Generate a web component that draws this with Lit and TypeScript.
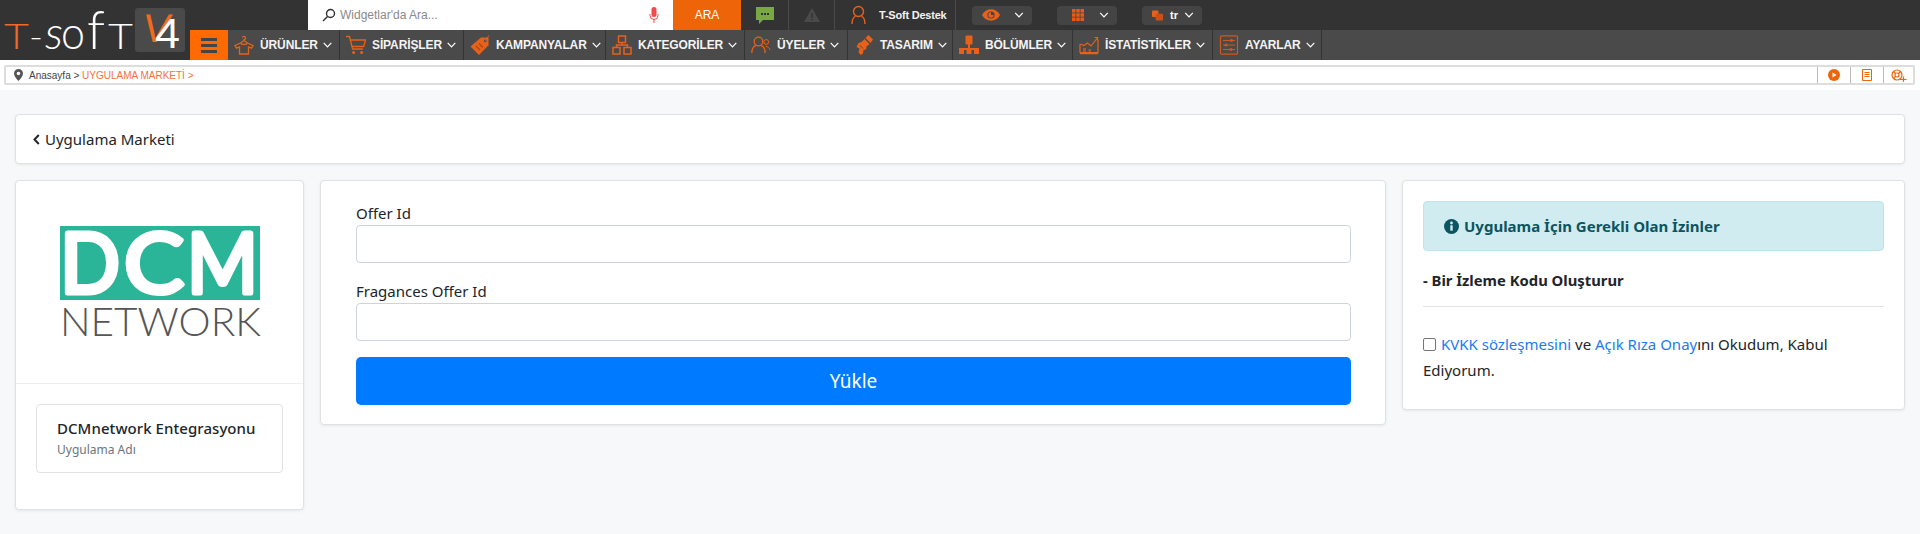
import { LitElement, html, css, svg } from "lit";
import { customElement } from "lit/decorators.js";

const O = "#e8611a";
const chev = (w = 9) => svg`<svg class="chev" width="${w}" height="6" viewBox="0 0 9 6"><path d="M.7.9 4.500 4.800 8.300.9" fill="none" stroke="#fff" stroke-width="1.200"/></svg>`;

const icons: Record<string, unknown> = {
  shirt: svg`<svg width="20" height="20" viewBox="0 0 20 20" fill="none" stroke="${O}" stroke-width="1.300"><path d="M6.500 8 1 10.500l1.500 2.600 3-1.200V19h9v-7.100l3 1.200 1.500-2.600L13.500 8l-3.500-2.500z"/><path d="M8.400 2.600a1.600 1.600 0 1 1 1.600 2v1.500"/><path d="M6.500 8c1 2 6 2 7 0"/></svg>`,
  cart: svg`<svg width="20" height="20" viewBox="0 0 20 20" fill="none" stroke="${O}" stroke-width="1.300"><path d="M0 1.500h3.500L6.600 14h10.200"/><path d="M4.600 5h15l-2 6.500H6.200"/><circle cx="7.600" cy="17.400" r="1.500" fill="${O}" stroke="none"/><circle cx="15.600" cy="17.400" r="1.500" fill="${O}" stroke="none"/></svg>`,
  tag: svg`<svg width="20" height="20" viewBox="0 0 20 20"><path d="M11 2.500h7.500v7.800L9 20 .5 11.500z" fill="${O}"/><circle cx="15.200" cy="5.800" r="1.400" fill="#4a4a4a"/><path d="M15.200 5.800 19 .5" stroke="${O}" fill="none"/><path d="M6 11l4 4M9 8.500l4 4" stroke="#a8471a" stroke-width="1.200"/></svg>`,
  org: svg`<svg width="20" height="20" viewBox="0 0 20 20" fill="none" stroke="${O}" stroke-width="1.500"><rect x="6.500" y="1" width="7" height="6.500"/><rect x="1" y="12.500" width="7" height="6.500"/><rect x="12" y="12.500" width="7" height="6.500"/><path d="M10 7.500V10M4.500 12.500V10h11v2.500"/></svg>`,
  users: svg`<svg width="20" height="20" viewBox="0 0 20 20" fill="none" stroke="${O}" stroke-width="1.300"><circle cx="7.500" cy="6.500" r="4.300"/><path d="M.8 18c0-5 2.600-7.200 4.200-7.500M14.200 18c0-5-2.600-7.200-4.200-7.500"/><circle cx="15.200" cy="7" r="2.400" stroke-width="1"/><path d="M14.800 11.300c2 .3 3.700 1.600 4.300 3.700" stroke-width="1"/></svg>`,
  brush: svg`<svg width="20" height="22" viewBox="0 0 20 22"><path d="M14.500 1 19 5.500l-2.500 3.500-5-5z" fill="${O}"/><path d="M10.500 5l5 5-3 2.500-.5 3-2.500.5-.5 3.500-2.500 1.500-2-3 1-3.500-3-1.500 2-4 3-1z" fill="${O}"/><path d="M6 11.500l3 3" stroke="#4a4a4a"/></svg>`,
  tree: svg`<svg width="20" height="20" viewBox="0 0 20 20" fill="${O}"><rect x="6.500" y=".5" width="7" height="9" rx="1"/><rect x="9" y="9" width="2" height="5"/><rect x="0" y="13" width="20" height="2"/><rect x="0" y="14" width="5" height="5"/><rect x="7.500" y="14" width="5" height="5"/><rect x="15" y="14" width="5" height="5"/></svg>`,
  chart: svg`<svg width="20" height="20" viewBox="0 0 20 20" fill="none" stroke="${O}" stroke-width="1.200"><path d="M1 9v8.500h18V5"/><path d="M1 18.500h18" stroke-width="1.500"/><path d="M1.500 9 5 10.500 8.500 8l3.500 3 6-7.500"/><path d="M15.500 2.500h3v3"/><path d="M4 13h3v4H4zM9.500 14h2.500v3H9.500z" fill="${O}" stroke="none" opacity=".6"/></svg>`,
  cfg: svg`<svg width="20" height="20" viewBox="0 0 20 20" fill="none" stroke="#c85a24" stroke-width="1.200"><rect x="1.500" y=".8" width="17" height="18.400" rx="1"/><path d="M4 5.500h12M4 10h12M4 14.500h12"/><circle cx="12.500" cy="5.500" r="1" fill="#c85a24"/><circle cx="7" cy="10" r="1" fill="#c85a24"/><circle cx="12" cy="14.500" r="1" fill="#c85a24"/></svg>`,
};

const nav = [
  ["shirt", "ÜRÜNLER"], ["cart", "SİPARİŞLER"], ["tag", "KAMPANYALAR"], ["org", "KATEGORİLER"], ["users", "ÜYELER"],
  ["brush", "TASARIM"], ["tree", "BÖLÜMLER"], ["chart", "İSTATİSTİKLER"], ["cfg", "AYARLAR"],
];

@customElement("app-root")
export class AppRoot extends LitElement {
  static styles = css`
    :host { display: block; min-height: 534px; background: #f7f8fa; font-family: "Noto Sans", "Open Sans", sans-serif; color: #212529; }
    * { box-sizing: border-box; }
    .head { display: flex; height: 60px; background: #333; font-family: "Liberation Sans", Arial, sans-serif; }
    .brand { width: 190px; flex: none; }
    .wordmark { display: block; }
    .lt { font-family: Lato, sans-serif; font-weight: 300; fill: #fff; }
    .lt.o { fill: #ed6a2a; }
    .ls { font-family: "Liberation Sans", sans-serif; }
    .cols { flex: 1; display: flex; flex-direction: column; min-width: 0; }
    .top { height: 30px; display: flex; align-items: stretch; padding-left: 118px; }
    .search { width: 365px; background: #fff; display: flex; align-items: center; padding-left: 14px; color: #8a8a8a; font-size: 12px; gap: 4px; }
    .search span { flex: 1; }
    .search .mic { margin-right: 14px; }
    .ara { width: 68px; background: #ed6409; color: #fff; font-size: 12px; display: flex; align-items: center; justify-content: center; }
    .tcell { display: flex; align-items: center; justify-content: center; border-right: 1px solid #4a4a4a; }
    .c1 { width: 48px; }
    .c2 { width: 46px; }
    .c3 { width: 121px; gap: 13px; color: #f2f2f2; font-size: 11px; font-weight: 700; letter-spacing: -.02em; justify-content: flex-start; padding-left: 16px; }
    .drops { display: flex; align-items: center; gap: 25px; padding-left: 16px; }
    .drop { width: 60px; height: 19px; background: #444; border-radius: 4px; display: flex; align-items: center; justify-content: space-between; padding: 0 8px 0 10px; color: #fff; font-size: 11px; font-weight: 700; }
    .drop .in { display: flex; align-items: center; gap: 7px; }
    .drop.g .in { padding-left: 5px; }
    .menu { height: 30px; display: flex; }
    .burger { width: 38px; background: #ff6a00; display: flex; flex-direction: column; gap: 3px; align-items: center; justify-content: center; }
    .burger i { display: block; width: 16px; height: 3px; background: #444; }
    .items { display: grid; grid-template-columns: 112px 124px 142px 139px 103px 105px 120px 140px 109px; background: #4a4a4a; }
    .item { display: flex; align-items: center; border-right: 1px solid #333; padding-left: 6px; color: #f4f4f4; font-size: 12px; font-weight: 700; white-space: nowrap; letter-spacing: -.01em; }
    .item svg:first-child { margin-right: 6px; flex: none; }
    .item .chev { margin-left: 5px; flex: none; }
    .rest { flex: 1; background: #4a4a4a; }
    .crumbwrap { background: #fff; height: 30px; padding: 5px 5px 5px 4px; }
    .crumb { height: 20px; border: 2px solid #ddd; border-radius: 2px; display: flex; align-items: center; font: 10px "Liberation Sans", Arial, sans-serif; color: #444; padding-left: 8px; }
    .crumb .here { color: #f4723c; }
    .crumb .txt { flex: 1; padding-left: 6px; }
    .tool { width: 33px; height: 16px; border-left: 1px solid #bbb; display: flex; align-items: center; justify-content: center; }
    .tool:last-child { width: 30px; }
    .page { padding: 24px 15px 0 15px; }
    .card { background: #fff; border: 1px solid #dfe1e5; border-radius: 4px; box-shadow: 0 1px 3px rgba(0,0,0,.07); }
    .title { height: 50px; display: flex; align-items: center; padding-left: 17px; gap: 5px; font-size: 15px; color: #212529; margin-bottom: 16px; }
    .grid { display: grid; grid-template-columns: 289px 1066px 503px; gap: 16px; align-items: start; }
    .logo { height: 203px; display: flex; align-items: center; justify-content: center; border-bottom: 1px solid #eee; padding: 0 0 1px 2px; }
    .logo svg { display: block; }
    .logo .d { font-family: Lato, "Noto Sans", sans-serif; font-weight: 400; font-size: 84px; fill: #fff; stroke: #fff; stroke-width: 5px; stroke-linejoin: round; }
    .logo .n { font-family: Lato, "Noto Sans", sans-serif; font-weight: 300; font-size: 40px; fill: #555; }
    .appbox { margin: 20px 20px 36px; padding: 20px 20px 0; height: 69px; border: 1px solid #dfe1e5; border-radius: 4px; }
    .appbox b { display: block; font-size: 15px; font-weight: 500; letter-spacing: .004em; line-height: 20px; margin-top: -7px; white-space: nowrap; }
    .appbox small { display: block; font-size: 12px; color: #6c757d; line-height: 20px; margin-top: 2px; }
    .formcard { padding: 20px 34px 19px 35px; height: 245px; }
    label { display: block; font-size: 15px; line-height: 24px; }
    .inp { display: block; height: 38px; border: 1px solid #ced4da; border-radius: 4px; background: #fff; margin-bottom: 16px; }
    .btn { height: 48px; background: #007bff; color: #fff; border-radius: 5px; font-size: 19px; display: flex; align-items: center; justify-content: center; }
    .perm { padding: 20px; height: 230px; }
    .alert { height: 50px; border: 1px solid #bee5eb; background: #d1ecf1; border-radius: 4px; color: #0c5460; font-weight: 700; font-size: 15px; display: flex; align-items: center; padding-left: 20px; gap: 5px; }
    .bold { font-weight: 700; font-size: 14.800px; line-height: 24px; margin-top: 17px; }
    hr { border: 0; border-top: 1px solid #e2e3e5; margin: 14px 0 24px; }
    .agree { font-size: 15px; line-height: 26px; }
    .agree a { color: #1a7cf0; text-decoration: none; }
    .box { display: inline-block; width: 13px; height: 13px; border: 1px solid #767676; border-radius: 2px; background: #fff; vertical-align: -1px; margin-right: 5px; }
  `;

  render() {
    return html`
      <div class="head">
        <div class="brand">
          <svg class="wordmark" width="190" height="60" viewBox="0 0 190 60">
            <text class="lt o" x="4" y="49" font-size="36" textLength="25" lengthAdjust="spacingAndGlyphs">T</text>
            <text class="lt" x="29" y="49" font-size="36" textLength="14" lengthAdjust="spacingAndGlyphs">-</text>
            <text class="lt" x="45" y="49" font-size="46" font-style="italic" textLength="18" lengthAdjust="spacingAndGlyphs">s</text>
            <text class="lt" x="61" y="49" font-size="46" textLength="24" lengthAdjust="spacingAndGlyphs">o</text>
            <text class="lt" x="87" y="49" font-size="54" textLength="18" lengthAdjust="spacingAndGlyphs">f</text>
            <text class="lt" x="108" y="49" font-size="36" textLength="25" lengthAdjust="spacingAndGlyphs">T</text>
            <rect x="135" y="8" width="50" height="44" rx="3" fill="#4a4a4a"/>
            <text class="ls" transform="translate(141 42) skewX(-10)" font-size="40" fill="#f26a1b" textLength="27" lengthAdjust="spacingAndGlyphs">V</text>
            <text class="ls" x="155" y="48" font-size="42" fill="#fff" textLength="25" lengthAdjust="spacingAndGlyphs">4</text>
          </svg>
        </div>
        <div class="cols">
          <div class="top">
            <div class="search">
              <svg width="14" height="14" viewBox="0 0 14 14" fill="none" stroke="#333" stroke-width="1.400"><circle cx="8.500" cy="5.500" r="4"/><path d="M5.500 8.500 1 13"/></svg>
              <span>Widgetlar'da Ara...</span>
              <svg class="mic" width="10" height="16" viewBox="0 0 10 16" fill="#ef4b4b"><rect x="2.500" y="0" width="5" height="10" rx="2.500"/><path d="M1 7v1.500a4 4 0 0 0 8 0V7" fill="none" stroke="#ef4b4b" stroke-width="1"/><rect x="4.500" y="12" width="1" height="4"/></svg>
            </div>
            <div class="ara">ARA</div>
            <div class="tcell c1">
              <svg width="18" height="19" viewBox="0 0 18 19"><path d="M0 1h18v13H7l-4 4v-4H0z" fill="#7aa843"/><path d="M5 7h2v2H5zM8 7h2v2H8zM11 7h2v2h-2z" fill="#333"/></svg>
            </div>
            <div class="tcell c2">
              <svg width="16" height="14" viewBox="0 0 16 14"><path d="M8 0 16 14H0z" fill="#4a4a4a"/><rect x="7.300" y="5" width="1.400" height="5" fill="#333"/><rect x="7.300" y="11" width="1.400" height="1.400" fill="#333"/></svg>
            </div>
            <div class="tcell c3">
              <svg width="15" height="20" viewBox="0 0 15 20" fill="none" stroke="#e8611a" stroke-width="1.400"><circle cx="7.500" cy="6.500" r="5"/><path d="M1 19c0-5 1.800-7 3.500-8M14 19c0-5-1.800-7-3.500-8"/></svg>
              <span>T-Soft Destek</span>
            </div>
            <div class="drops">
              <div class="drop e"><span class="in"><svg width="18" height="12" viewBox="0 0 19 12"><path d="M0 6c4-8 15-8 19 0-4 8-15 8-19 0z" fill="#e8611a"/><circle cx="9.500" cy="6" r="3.800" fill="#444"/><path d="M9.500 3.200a2.800 2.800 0 1 0 2.800 2.800H9.500z" fill="#e8611a"/></svg></span>${chev(10)}</div>
              <div class="drop g"><span class="in"><svg width="12" height="12" viewBox="0 0 12 12" fill="#ea5a14"><path d="M0 0h3.500v3.500H0zM4.250 0h3.500v3.500h-3.500zM8.500 0H12v3.500H8.500zM0 4.250h3.500v3.500H0zM4.250 4.250h3.500v3.500h-3.500zM8.500 4.250H12v3.500H8.500zM0 8.500h3.500V12H0zM4.250 8.500h3.500V12h-3.500zM8.500 8.500H12V12H8.500z"/></svg></span>${chev(10)}</div>
              <div class="drop t"><span class="in"><svg width="11" height="11" viewBox="0 0 12 11" fill="#e8611a"><rect x="0" y="0" width="7" height="7" rx="1"/><rect x="4" y="3.500" width="8" height="7.500" rx="1" fill="#c9501a"/></svg><span>tr</span></span>${chev(10)}</div>
            </div>
          </div>
          <div class="menu">
            <div class="burger"><i></i><i></i><i></i></div>
            <div class="items">
              ${nav.map(([ic, t]) => html`<div class="item">${icons[ic]}<span>${t}</span>${chev()}</div>`)}
            </div>
            <div class="rest"></div>
          </div>
        </div>
      </div>
      <div class="crumbwrap">
        <div class="crumb">
          <svg width="9" height="12" viewBox="0 0 9 12"><path d="M4.500 0a4.500 4.500 0 0 1 4.500 4.500C9 7.500 4.500 12 4.500 12S0 7.500 0 4.500A4.500 4.500 0 0 1 4.500 0z" fill="#555"/><circle cx="4.500" cy="4.500" r="1.800" fill="#fff"/></svg>
          <span class="txt">Anasayfa &gt; <span class="here">UYGULAMA MARKETİ &gt;</span></span>
          <div class="tool"><svg width="12" height="12" viewBox="0 0 12 12"><circle cx="6" cy="6" r="6" fill="#ed6409"/><path d="M4.500 3.500 8.500 6l-4 2.500z" fill="#fff"/></svg></div>
          <div class="tool"><svg width="10" height="12" viewBox="0 0 10 12" fill="none" stroke="#ed6409"><path d="M.5.500h9v11H.5z"/><path d="M2.500 3.500h5M2.500 5.500h5M2.500 7.500h5"/></svg></div>
          <div class="tool"><svg width="16" height="13" viewBox="0 0 16 13" fill="none" stroke="#ed6409" stroke-width="1.200"><circle cx="6" cy="6" r="5"/><circle cx="6" cy="6" r="2"/><path d="M2.500 2.500 4.500 4.500M9.500 2.500 7.500 4.500M2.500 9.500l2-2"/><path d="M9 10.500h6.500M12.500 7.500v5.500"/></svg></div>
        </div>
      </div>
      <div class="page">
        <div class="card title">
          <svg width="7" height="11" viewBox="0 0 7 11"><path d="M5.800 1 1.500 5.500l4.300 4.500" fill="none" stroke="#212529" stroke-width="2"/></svg>
          <span>Uygulama Marketi</span>
        </div>
        <div class="grid">
          <div class="card">
            <div class="logo">
              <svg width="202" height="112" viewBox="0 0 202 112">
                <rect x="0" y="0" width="200" height="74" fill="#2ab498"/>
                <text class="d" x="0" y="67" textLength="60" lengthAdjust="spacingAndGlyphs">D</text>
                <text class="d" x="64" y="67" textLength="60" lengthAdjust="spacingAndGlyphs">C</text>
                <text class="d" x="127" y="67" textLength="71" lengthAdjust="spacingAndGlyphs">M</text>
                <text class="n" x="0" y="110" textLength="201" lengthAdjust="spacingAndGlyphs">NETWORK</text>
              </svg>
            </div>
            <div class="appbox">
              <b>DCMnetwork Entegrasyonu</b>
              <small>Uygulama Adı</small>
            </div>
          </div>
          <div class="card formcard">
            <label>Offer Id</label>
            <div class="inp"></div>
            <label>Fragances Offer Id</label>
            <div class="inp"></div>
            <div class="btn">Yükle</div>
          </div>
          <div class="card perm">
            <div class="alert">
              <svg width="15" height="15" viewBox="0 0 15 15"><circle cx="7.500" cy="7.500" r="7.500" fill="#0c5460"/><rect x="6.300" y="6.300" width="2.400" height="5.400" fill="#d1ecf1"/><circle cx="7.500" cy="4" r="1.400" fill="#d1ecf1"/></svg>
              <span>Uygulama İçin Gerekli Olan İzinler</span>
            </div>
            <div class="bold">- Bir İzleme Kodu Oluşturur</div>
            <hr />
            <div class="agree"><span class="box"></span><a>KVKK sözleşmesini</a> ve <a>Açık Rıza Onay</a>ını Okudum, Kabul Ediyorum.</div>
          </div>
        </div>
      </div>
    `;
  }
}
